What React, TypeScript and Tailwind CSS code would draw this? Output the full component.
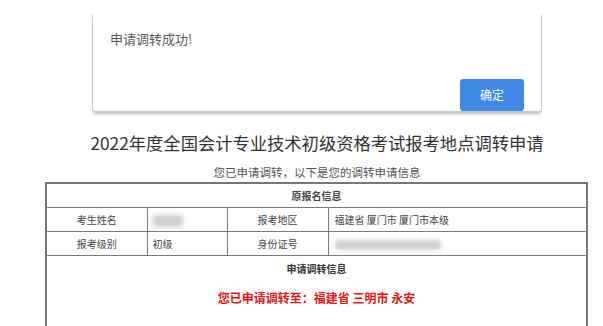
import React from 'react';

const font = "font-['Microsoft_YaHei','Noto_Sans_CJK_SC',sans-serif]";

const Blur: React.FunctionComponent<{ w: string; h: string }> = ({ w, h }) => (
  <span className={`inline-block ${h} ${w} rounded-[4px] bg-[#cfcfcf] blur-[2px] align-middle`} />
);

const SuccessDialog: React.FunctionComponent = () => (
  <div className="absolute left-[92px] top-[15px] w-[450px] h-[97px] bg-white border-x border-b border-[#c8c8c8] rounded-b-[3px] shadow-[0_3px_3px_-1px_rgba(0,0,0,0.25)]">
    <p className="pl-[17px] pt-[15px] text-[13px] leading-[18px] text-[#5a5a5a]">申请调转成功!</p>
    <div className="flex justify-end pr-[17px] pt-[31px]">
      <button className="w-[64px] h-[32px] rounded-[3px] bg-[#3d8ae6] text-white text-[12px]">确定</button>
    </div>
  </div>
);

const cell = 'border border-[#7a7a7a] h-[24px] text-[10px] text-[#444] p-0';

const App: React.FunctionComponent = () => {
  return (
    <div className={`relative w-[603px] h-[326px] overflow-hidden bg-white ${font}`}>
      <SuccessDialog />

      <div className="pt-[131px]">
        <h1 className="text-center text-[17.3px] leading-[24px] text-[#333] pl-[31px]">
          2022年度全国会计专业技术初级资格考试报考地点调转申请
        </h1>
        <p className="mt-[9px] text-center text-[11.5px] leading-[16px] text-[#555] pl-[31px]">
          您已申请调转，以下是您的调转申请信息
        </p>

        <table className="ml-[45px] mt-[2px] w-[543px] border-collapse border-2 border-[#777] table-fixed">
          <colgroup>
            <col className="w-[101px]" />
            <col className="w-[80px]" />
            <col className="w-[101px]" />
            <col />
          </colgroup>
          <tbody>
            <tr>
              <td colSpan={4} className={`${cell} h-[23px] text-center font-bold text-[#333]`}>原报名信息</td>
            </tr>
            <tr>
              <td className={`${cell} text-center`}>考生姓名</td>
              <td className={`${cell} pl-[5px]`}><Blur w="w-[30px]" h="h-[12px]" /></td>
              <td className={`${cell} text-center`}>报考地区</td>
              <td className={`${cell} pl-[6px]`}>福建省 厦门市 厦门市本级</td>
            </tr>
            <tr>
              <td className={`${cell} text-center`}>报考级别</td>
              <td className={`${cell} pl-[5px]`}>初级</td>
              <td className={`${cell} text-center`}>身份证号</td>
              <td className={`${cell} pl-[6px]`}><Blur w="w-[106px]" h="h-[10px]" /></td>
            </tr>
            <tr>
              <td colSpan={4} className={`${cell} h-[80px] align-top text-center`}>
                <div className="pt-[6px] font-bold text-[#333] leading-[14px]">申请调转信息</div>
                <div className="mt-[14px] text-[12px] leading-[16px] font-bold text-[#f01010]">
                  您已申请调转至：福建省 三明市 永安
                </div>
              </td>
            </tr>
          </tbody>
        </table>
      </div>
    </div>
  );
};

export default App;
